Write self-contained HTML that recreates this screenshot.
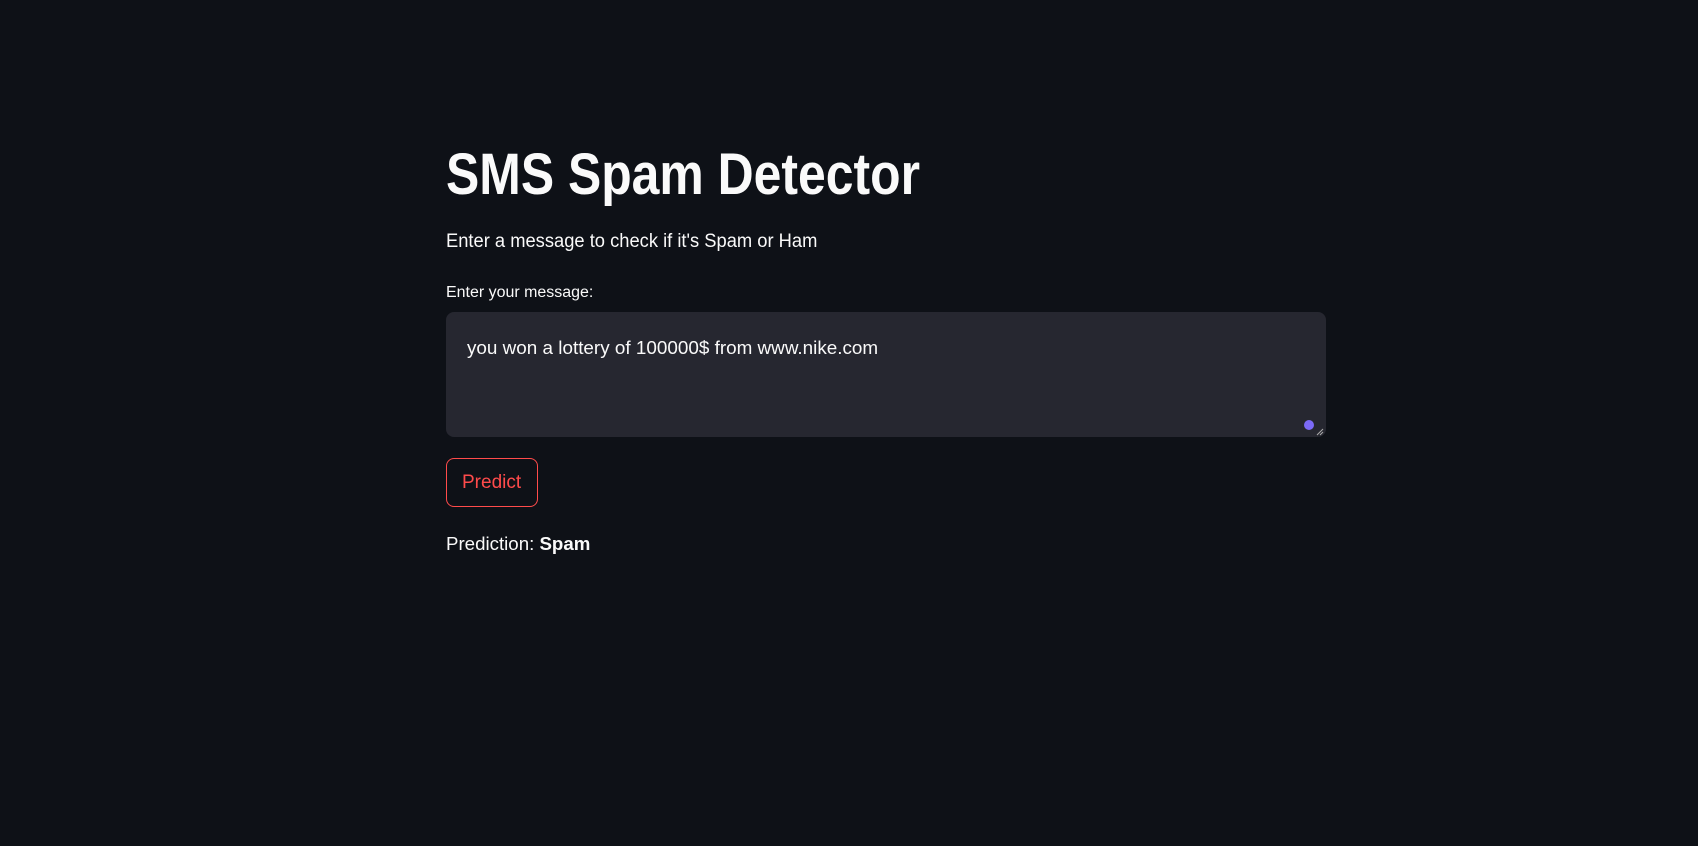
<!DOCTYPE html>
<html><head><meta charset="utf-8"><style>
html,body{margin:0;padding:0;width:1698px;height:846px;background:#0e1117;overflow:hidden;font-family:"Liberation Sans",sans-serif;color:#fafafa}
.a{position:absolute;white-space:nowrap;transform-origin:left center}
</style></head><body>
<div class="a" style="left:446px;top:141px;font-size:58px;font-weight:bold;line-height:68px;transform:scaleX(0.86)">SMS Spam Detector</div>
<div class="a" style="left:446px;top:230px;font-size:19px;line-height:24px;transform:scaleX(0.965)">Enter a message to check if it's Spam or Ham</div>
<div class="a" style="left:446px;top:283px;font-size:15.5px;line-height:20px;transform:scaleX(1.03)">Enter your message:</div>
<div style="position:absolute;left:446px;top:312px;width:880px;height:125px;background:#262730;border-radius:8px"></div>
<div class="a" style="left:467px;top:336px;font-size:18.5px;line-height:24px;transform:scaleX(1.02)">you won a lottery of 100000$ from www.nike.com</div>
<div style="position:absolute;left:1304px;top:420px;width:10px;height:10px;border-radius:50%;background:#7c6af7"></div>
<svg style="position:absolute;left:1316px;top:428px" width="8" height="8"><path d="M1 7L7 1M4 7L7 4" stroke="#aaa" stroke-width="1"/></svg>
<div style="position:absolute;left:446px;top:458px;width:92px;height:49px;border:1px solid #ff4b4b;border-radius:8px;box-sizing:border-box"></div>
<div class="a" style="left:462px;top:471px;font-size:19px;line-height:24px;color:#ff4b4b;transform:scaleX(1.0)">Predict</div>
<div class="a" style="left:446px;top:532px;font-size:18.5px;line-height:24px;transform:scaleX(1.01)">Prediction: <b>Spam</b></div>
</body></html>
